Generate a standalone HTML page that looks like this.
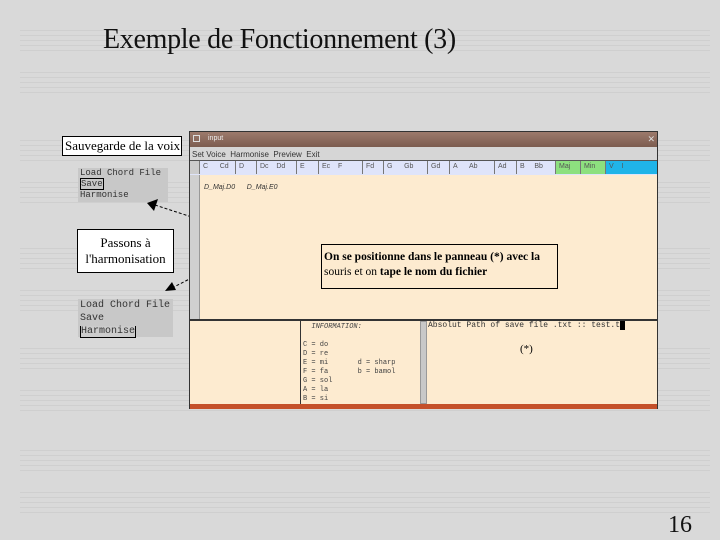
<!DOCTYPE html>
<html><head><meta charset="utf-8"><style>
*{margin:0;padding:0;box-sizing:border-box}
body{width:720px;height:540px;overflow:hidden;background:#d9d9d9;position:relative;font-family:"Liberation Serif",serif}
.a{position:absolute}
.st{position:absolute;left:20px;width:690px;height:22px;background:repeating-linear-gradient(#cfcfcf 0 1px,transparent 1px 5px)}
.mono{font-family:"Liberation Mono",monospace}
.btn{position:absolute;top:0;height:13px;border-right:1px solid #777;font-family:"Liberation Sans",sans-serif;font-size:7px;color:#555;padding:2px 0 0 3px}
</style></head><body>
<div class="st" style="top:30px"></div>
<div class="st" style="top:72px"></div>
<div class="st" style="top:140px"></div>
<div class="st" style="top:182px"></div>
<div class="st" style="top:248px"></div>
<div class="st" style="top:290px"></div>
<div class="st" style="top:348px"></div>
<div class="st" style="top:390px"></div>
<div class="st" style="top:450px"></div>
<div class="st" style="top:492px"></div>

<div class="a" style="left:103px;top:24px;font-size:28px;color:#111;letter-spacing:-0.3px">Exemple de Fonctionnement (3)</div>
<div class="a" style="left:668px;top:512px;font-size:24px;color:#111">16</div>

<div class="a" style="left:62px;top:136px;width:120px;height:20px;background:#fff;border:1px solid #000;font-size:13px;padding:1px 0 0 2px;white-space:nowrap">Sauvegarde de la voix</div>

<div class="a mono" style="left:78px;top:168px;width:90px;height:34px;background:#c8c8c8;font-size:9px;line-height:11px;color:#333;padding-left:2px">Load Chord File<br><span style="border:1px solid #000">Save </span><br>Harmonise</div>

<div class="a" style="left:77px;top:229px;width:97px;height:44px;background:#fff;border:1px solid #000;font-size:13px;text-align:center;line-height:16px;padding-top:5px">Passons à<br>l'harmonisation</div>

<div class="a mono" style="left:78px;top:299px;width:95px;height:38px;background:#c8c8c8;font-size:10px;line-height:13px;color:#333;padding-left:2px">Load Chord File<br>Save<br><span style="border:1px solid #000;border-top:none;background:#ccc">Harmonise</span></div>

<svg class="a" style="left:0;top:0" width="720" height="540">
<g stroke="#000" stroke-dasharray="3,2" fill="none"><line x1="155" y1="205" x2="207" y2="222"/><line x1="172" y1="288" x2="203" y2="272"/></g>
<polygon points="147,203 158,199 154,211" fill="#000"/><polygon points="215,226 203,218 205,228" fill="#000"/>
<polygon points="165,291 172,282 176,290" fill="#000"/><polygon points="208,270 200,272 204,278" fill="#000"/>
</svg>

<div class="a" style="left:189px;top:131px;width:469px;height:278px;background:#fdebd0;border:1px solid #333">
 <div class="a" style="left:0;top:0;width:467px;height:15px;background:linear-gradient(#9c7a6c,#7c5c4f);color:#eee;font-family:'Liberation Sans',sans-serif;font-size:7px;padding:3px 0 0 18px">input
  <div class="a" style="left:3px;top:3px;width:7px;height:7px;border:1px solid #ddd"></div>
  <div class="a" style="right:2px;top:2px;color:#ddd;font-size:9px">✕</div></div>
 <div class="a" style="left:0;top:15px;width:467px;height:14px;background:#d6d6d6;font-family:'Liberation Sans',sans-serif;font-size:8px;color:#333;padding:3px 0 0 2px;border-bottom:1px solid #555">Set Voice &nbsp;Harmonise &nbsp;Preview &nbsp;Exit</div>
 <div class="a" style="left:0;top:29px;width:467px;height:14px;background:#dfe4fa">
  <div class="btn" style="left:0;width:10px;background:#ccc"></div>
  <div class="btn" style="left:10px;width:36px">C &nbsp;&nbsp;&nbsp;&nbsp;&nbsp;Cd</div>
  <div class="btn" style="left:46px;width:21px">D</div>
  <div class="btn" style="left:67px;width:40px">Dc &nbsp;&nbsp;&nbsp;Dd</div>
  <div class="btn" style="left:107px;width:22px">E</div>
  <div class="btn" style="left:129px;width:44px">Ec &nbsp;&nbsp;&nbsp;F</div>
  <div class="btn" style="left:173px;width:21px">Fd</div>
  <div class="btn" style="left:194px;width:44px">G &nbsp;&nbsp;&nbsp;&nbsp;&nbsp;Gb</div>
  <div class="btn" style="left:238px;width:22px">Gd</div>
  <div class="btn" style="left:260px;width:45px">A &nbsp;&nbsp;&nbsp;&nbsp;&nbsp;Ab</div>
  <div class="btn" style="left:305px;width:22px">Ad</div>
  <div class="btn" style="left:327px;width:39px">B &nbsp;&nbsp;&nbsp;&nbsp;Bb</div>
  <div class="btn" style="left:366px;width:25px;background:#8de07f">Maj</div>
  <div class="btn" style="left:391px;width:25px;background:#8de07f">Min</div>
  <div class="btn" style="left:416px;width:51px;background:#20b4e8;border:none">V &nbsp;&nbsp;&nbsp;I</div>
 </div>
 <div class="a" style="left:0;top:43px;width:10px;height:144px;background:#d0d0d0;border-right:1px solid #999"></div>
 <div class="a" style="left:14px;top:52px;font-size:7px;font-style:italic;color:#333;font-family:'Liberation Sans',sans-serif">D_Maj.D0 &nbsp;&nbsp;&nbsp;&nbsp;&nbsp;D_Maj.E0</div>
 <div class="a" style="left:0;top:187px;width:467px;height:2px;background:#333"></div>
 <div class="a" style="left:110px;top:189px;width:1px;height:83px;background:#333"></div>
 <div class="a" style="left:230px;top:189px;width:7px;height:83px;background:#c8c8c8;border:1px solid #999"></div>
 <div class="a mono" style="left:113px;top:191px;font-size:7px;line-height:9px;color:#444;white-space:pre"><i>  INFORMATION:</i>

C = do
D = re
E = mi       d = sharp
F = fa       b = bamol
G = sol
A = la
B = si</div>
 <div class="a mono" style="left:238px;top:189px;font-size:8px;color:#333;white-space:nowrap">Absolut Path of save file .txt :: test.t<span style="background:#000">&nbsp;</span></div>
 <div class="a" style="left:330px;top:211px;font-size:11px">(*)</div>
 <div class="a" style="left:0;top:272px;width:467px;height:5px;background:#c4502a"></div>
</div>

<div class="a" style="left:321px;top:244px;width:237px;height:45px;background:#fdebd0;border:1px solid #000;font-size:11.5px;line-height:15px;padding:5px 0 0 2px;white-space:nowrap"><b>On se positionne dans le panneau (*) avec la</b><br>souris et on <b>tape le nom du fichier</b></div>
</body></html>
